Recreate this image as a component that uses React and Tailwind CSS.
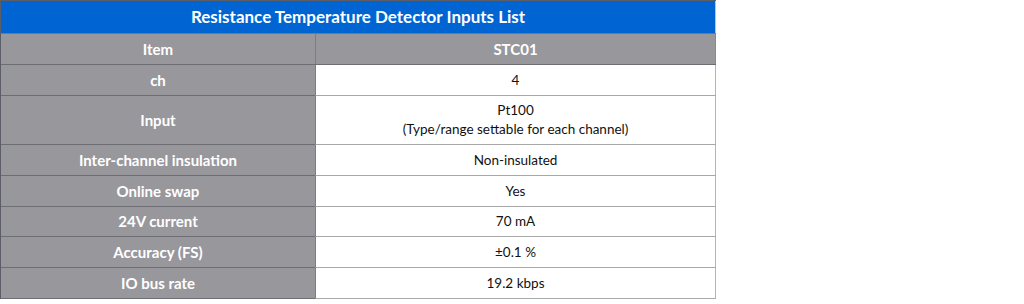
const rows = [
    { label: 'ch', value: ['4'], h: 'h-[30px]' },
    { label: 'Input', value: ['Pt100', '(Type/range settable for each channel)'], h: 'h-[48px]' },
    { label: 'Inter-channel insulation', value: ['Non-insulated'], h: 'h-[30px]' },
    { label: 'Online swap', value: ['Yes'], h: 'h-[30px]' },
    { label: '24V current', value: ['70 mA'], h: 'h-[29px]' },
    { label: 'Accuracy (FS)', value: ['±0.1 %'], h: 'h-[30px]' },
    { label: 'IO bus rate', value: ['19.2 kbps'], h: 'h-[30px]' },
];

export default function App() {
    return (
        <div className="w-[1024px] h-[304px] bg-white" style={{ fontFamily: 'Lato, "Noto Sans", sans-serif' }}>
            <div className="w-[716px] border-t border-l border-[#5b5e66] border-r-[#c4c4c4]">
                {/* title */}
                <div className="h-[32px] bg-[#0064d2] border-r border-[#c4c4c4] flex items-center justify-center text-white font-bold text-[17px]">
                    Resistance Temperature Detector Inputs List
                </div>

                {/* header row */}
                <div className="flex border-t border-[#76777c] border-b border-b-[#6d6e73]">
                    <div className="w-[314px] h-[30px] bg-[#98979c] flex items-center justify-center text-white font-bold text-[15px]">
                        Item
                    </div>
                    <div className="flex-1 h-[30px] bg-[#98979c] border-l border-[#7c7c82] border-r border-r-[#8a8a8e] flex items-center justify-center text-white font-bold text-[15px]">
                        STC01
                    </div>
                </div>

                {rows.map((r) => (
                    <div key={r.label} className="flex">
                        <div className={`w-[314px] ${r.h} box-content bg-[#98979c] border-b border-[#6d6e73] flex items-center justify-center text-white font-bold text-[15px]`}>
                            {r.label}
                        </div>
                        <div className={`flex-1 ${r.h} box-content bg-white border-l border-[#7c7c82] border-r border-r-[#b4b4b4] border-b border-b-[#a8a8a8] flex flex-col items-center justify-center text-[#111] text-[13.5px] leading-[19px]`}>
                            {r.value.map((v) => (
                                <span key={v}>{v}</span>
                            ))}
                        </div>
                    </div>
                ))}
            </div>
        </div>
    );
}
